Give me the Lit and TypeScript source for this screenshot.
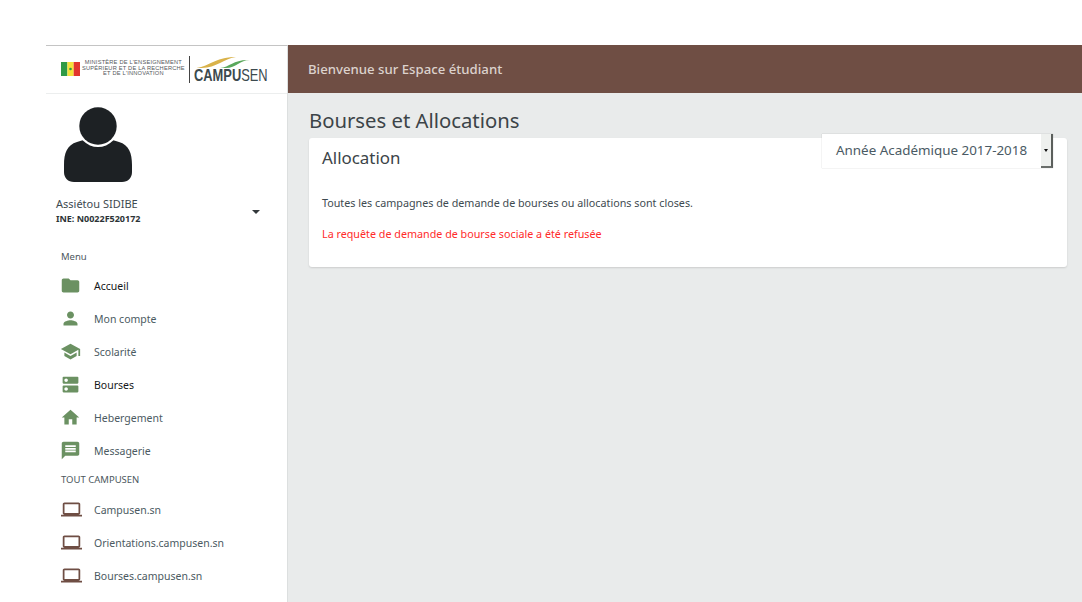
import { html, LitElement, css, svg } from 'lit';
import { customElement } from 'lit/decorators.js';

const icons = {
  folder: svg`<path d="M10 4H4c-1.1 0-1.99.9-1.99 2L2 18c0 1.1.9 2 2 2h16c1.1 0 2-.9 2-2V8c0-1.1-.9-2-2-2h-8l-2-2z"/>`,
  person: svg`<path d="M12 12c2.21 0 4-1.79 4-4s-1.79-4-4-4-4 1.79-4 4 1.79 4 4 4zm0 2c-2.67 0-8 1.34-8 4v2h16v-2c0-2.66-5.33-4-8-4z"/>`,
  school: svg`<path d="M5 13.18v4L12 21l7-3.82v-4L12 17l-7-3.82zM12 3L1 9l11 6 9-4.91V17h2V9L12 3z"/>`,
  dns: svg`<path d="M20 13H4c-.55 0-1 .45-1 1v6c0 .55.45 1 1 1h16c.55 0 1-.45 1-1v-6c0-.55-.45-1-1-1zM7 19c-1.1 0-2-.9-2-2s.9-2 2-2 2 .9 2 2-.9 2-2 2zM20 3H4c-.55 0-1 .45-1 1v6c0 .55.45 1 1 1h16c.55 0 1-.45 1-1V4c0-.55-.45-1-1-1zM7 9c-1.1 0-2-.9-2-2s.9-2 2-2 2 .9 2 2-.9 2-2 2z"/>`,
  home: svg`<path d="M10 20v-6h4v6h5v-8h3L12 3 2 12h3v8z"/>`,
  message: svg`<path d="M20 2H4c-1.1 0-1.99.9-1.99 2L2 22l4-4h14c1.1 0 2-.9 2-2V4c0-1.1-.9-2-2-2zm-2 12H6v-2h12v2zm0-3H6V9h12v2zm0-3H6V6h12v2z"/>`,
};

const laptop = svg`<path d="M20 18c1.1 0 1.99-.9 1.99-2L22 6c0-1.1-.9-2-2-2H4c-1.1 0-2 .9-2 2v10c0 1.1.9 2 2 2H0v2h24v-2h-4zM4 6h16v10H4V6z"/>`;

const menu = [
  { label: 'Accueil', icon: icons.folder, active: true },
  { label: 'Mon compte', icon: icons.person },
  { label: 'Scolarité', icon: icons.school },
  { label: 'Bourses', icon: icons.dns, active: true },
  { label: 'Hebergement', icon: icons.home },
  { label: 'Messagerie', icon: icons.message },
];

const links = ['Campusen.sn', 'Orientations.campusen.sn', 'Bourses.campusen.sn'];

@customElement('app-root')
export class AppRoot extends LitElement {
  static styles = css`
    :host {
      display: grid;
      grid-template-columns: 242px 1fr;
      height: 602px;
      box-sizing: border-box;
      padding: 45px 0 0 46px;
      overflow: hidden;
      font-family: 'Noto Sans', sans-serif;
      color: #3e4a50;
      background: #fff;
    }
    .sidebar {
      border-top: 1px solid #c4c4c4;
      border-right: 1px solid #dcdfdf;
      box-sizing: border-box;
      background: #fff;
    }
    .brand {
      height: 47px;
      border-bottom: 1px solid #eceeee;
      display: flex;
      align-items: center;
      padding: 0 0 0 15px;
      gap: 2px;
    }
    .flag {
      width: 19px;
      height: 14px;
      flex: none;
      margin-top: -1px;
    }
    .ministry {
      font-family: 'Liberation Sans', sans-serif;
      font-size: 5.7px;
      line-height: 5.5px;
      color: #55585c;
      text-align: center;
      letter-spacing: 0.2px;
      white-space: nowrap;
      margin-top: -2px;
    }
    .logo {
      border-left: 1px solid #444;
      margin-left: 2px;
      padding-left: 4px;
      height: 27px;
      display: flex;
      flex-direction: column;
      justify-content: flex-end;
    }
    .logo svg {
      display: block;
      margin-bottom: -1px;
    }
    .logo span {
      font-family: 'Liberation Sans', sans-serif;
      font-size: 16.5px;
      line-height: 15px;
      color: #3c4a4e;
      transform: scaleX(0.78);
      transform-origin: left;
      white-space: nowrap;
      font-weight: 700;
    }
    .logo span b {
      font-weight: 400;
    }
    .profile {
      padding: 13px 0 0 10px;
    }
    .avatar {
      display: block;
      margin-left: 7px;
    }
    .who {
      display: flex;
      align-items: center;
      justify-content: space-between;
      margin-top: 14px;
      padding-right: 27px;
    }
    .name {
      font-size: 11px;
      line-height: 14px;
    }
    .ine {
      font-size: 9px;
      line-height: 14px;
      margin-top: 1px;
      font-weight: 700;
      color: #2c3336;
    }
    .caret {
      width: 0;
      height: 0;
      border-left: 4px solid transparent;
      border-right: 4px solid transparent;
      border-top: 4px solid #33383b;
    }
    .section {
      font-size: 9.5px;
      line-height: 14px;
      padding-left: 15px;
      color: #4d585d;
    }
    .section.first {
      margin-top: 24px;
      margin-bottom: 5px;
    }
    .section.second {
      margin-top: 6px;
      margin-bottom: 6px;
    }
    nav {
      display: flex;
      flex-direction: column;
    }
    .item {
      display: flex;
      align-items: center;
      height: 33px;
      padding-left: 14px;
      font-size: 10.5px;
      color: #4b5a62;
    }
    .item.active {
      color: #15181a;
    }
    .item svg {
      width: 21px;
      height: 21px;
      margin-right: 13px;
      flex: none;
      fill: #6b9162;
    }
    .item.link svg {
      margin-left: 1px;
      margin-right: 12px;
      fill: #6f4e44;
    }
    main {
      display: flex;
      flex-direction: column;
      background: #e9ebeb;
    }
    header {
      height: 48px;
      background: #6f4e44;
      color: #dcd2cd;
      display: flex;
      align-items: center;
      padding: 0 0 1px 20px;
      box-sizing: border-box;
      font-size: 13.2px;
      font-weight: 500;
    }
    .content {
      padding: 12px 15px 0 21px;
    }
    h1 {
      margin: 0;
      font-size: 20.3px;
      line-height: 30px;
      font-weight: 400;
      color: #3c4448;
    }
    .card {
      position: relative;
      background: #fff;
      border-radius: 3px;
      box-shadow: 0 1px 2px rgba(0, 0, 0, 0.13);
      padding: 8px 13px 26px;
      margin-top: 3px;
    }
    h2 {
      margin: 0 0 26px;
      font-size: 16.9px;
      line-height: 24px;
      font-weight: 400;
      color: #3c4448;
    }
    p {
      margin: 0;
      font-size: 10.75px;
      line-height: 14px;
      color: #3e4a50;
    }
    p.refused {
      margin-top: 17px;
      color: #ff2a2a;
    }
    .select {
      position: absolute;
      top: -4px;
      right: 14px;
      width: 231px;
      height: 34px;
      box-sizing: border-box;
      display: flex;
      align-items: center;
      justify-content: space-between;
      background: #fff;
      box-shadow: 0 0 1px rgba(0, 0, 0, 0.25);
      padding-left: 14px;
      font-size: 13.4px;
      color: #4a5a64;
    }
    .label {
      margin-top: -2px;
    }
    .spin {
      width: 12px;
      height: 34px;
      box-sizing: border-box;
      background: #eef0ee;
      border-right: 2px solid #5b5f5c;
      border-bottom: 2px solid #6a6e6b;
      display: flex;
      align-items: center;
      justify-content: center;
    }
    .spin i {
      border-left: 2.5px solid transparent;
      border-right: 2.5px solid transparent;
      border-top: 3px solid #111;
    }
  `;

  render() {
    return html`
      <aside class="sidebar">
        <div class="brand">
          <svg class="flag" viewBox="0 0 19 14">
            <rect width="6.4" height="14" fill="#2f9a46" />
            <rect x="6.4" width="6.3" height="14" fill="#f5e23a" />
            <rect x="12.7" width="6.3" height="14" fill="#e2352d" />
            <circle cx="9.5" cy="7" r="1.3" fill="#2f9a46" />
          </svg>
          <div class="ministry">
            MINISTÈRE DE L'ENSEIGNEMENT<br />SUPÉRIEUR ET DE LA RECHERCHE<br />ET DE L'INNOVATION
          </div>
          <div class="logo">
            <svg width="60" height="13" viewBox="0 0 60 13">
              <path d="M0 12C14 12 20 1 42 1 31 2 22 12 8 12z" fill="#d9b24a" />
              <path d="M26 12C36 11 40 3 56 4 46 4 42 12 32 12z" fill="#5aa85c" />
            </svg>
            <span>CAMPU<b>SEN</b></span>
          </div>
        </div>
        <div class="profile">
          <svg class="avatar" width="70" height="76" viewBox="0 0 70 76" fill="#1d2124">
            <path d="M1 58c0-12 3-20 13-23 4-1.500 9-3 14-3h14c5 0 10 1.500 14 3 10 3 13 11 13 23v7c0 6-4 10-10 10H11C5 75 1 71 1 65z" />
            <circle cx="35" cy="19" r="21" fill="#fff" />
            <circle cx="35" cy="19" r="18.7" />
          </svg>
          <div class="who">
            <div>
              <div class="name">Assiétou SIDIBE</div>
              <div class="ine">INE: N0022F520172</div>
            </div>
            <span class="caret"></span>
          </div>
        </div>
        <div class="section first">Menu</div>
        <nav>
          ${menu.map(
            (m) => html`<div class="item ${m.active ? 'active' : ''}">
              <svg viewBox="0 0 24 24">${m.icon}</svg>${m.label}
            </div>`
          )}
        </nav>
        <div class="section second">TOUT CAMPUSEN</div>
        <nav>
          ${links.map(
            (l) => html`<div class="item link">
              <svg viewBox="0 0 24 24">${laptop}</svg>${l}
            </div>`
          )}
        </nav>
      </aside>
      <main>
        <header>Bienvenue sur Espace étudiant</header>
        <div class="content">
          <h1>Bourses et Allocations</h1>
          <section class="card">
            <div class="select">
              <span class="label">Année Académique 2017-2018</span>
              <span class="spin"><i></i></span>
            </div>
            <h2>Allocation</h2>
            <p>Toutes les campagnes de demande de bourses ou allocations sont closes.</p>
            <p class="refused">La requête de demande de bourse sociale a été refusée</p>
          </section>
        </div>
      </main>
    `;
  }
}
